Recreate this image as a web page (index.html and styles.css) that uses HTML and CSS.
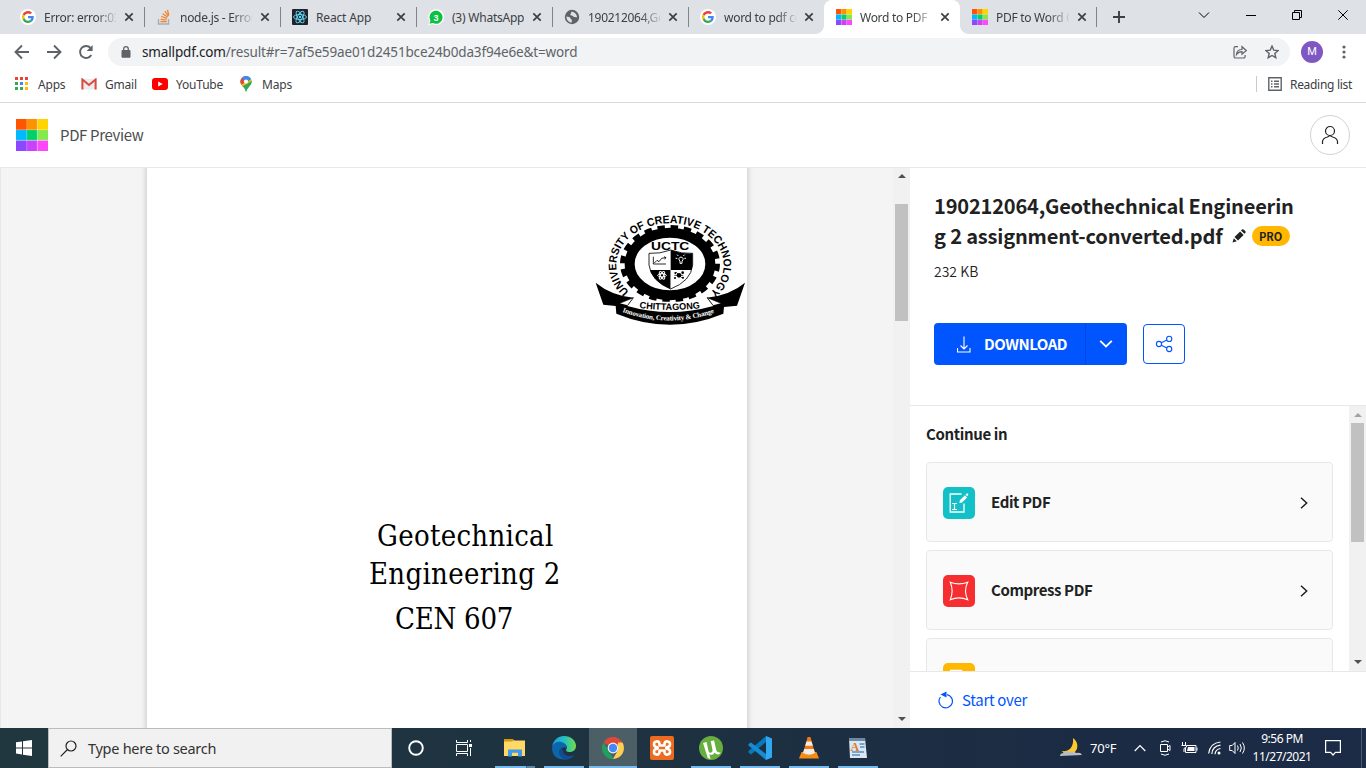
FILE: index.html
```html
<!DOCTYPE html>
<html lang="en">
<head>
<meta charset="utf-8">
<title>Word to PDF</title>
<link rel="stylesheet" href="styles.css">
</head>
<body>
<svg width="0" height="0" class="defs">
  <defs>
    <symbol id="google" viewBox="0 0 48 48"><path fill="#ea4335" d="M24 9.500c3.500 0 6.700 1.200 9.200 3.600l6.900-6.900C35.900 2.400 30.500 0 24 0 14.600 0 6.500 5.400 2.600 13.200l8 6.200C12.400 13.700 17.700 9.500 24 9.500z"/><path fill="#4285f4" d="M47 24.600c0-1.600-.2-3.100-.4-4.600H24v9h12.900c-.6 3-2.300 5.500-4.800 7.200l7.700 6C44.400 38 47 32 47 24.600z"/><path fill="#fbbc05" d="M10.500 28.600A14.500 14.500 0 0 1 10.500 19.400l-8-6.200a24 24 0 0 0 0 21.600z"/><path fill="#34a853" d="M24 48c6.500 0 12-2.100 15.900-5.800l-7.700-6A14.400 14.400 0 0 1 10.500 28.600l-8 6.200C6.500 42.600 14.600 48 24 48z"/></symbol>
    <symbol id="small" viewBox="0 0 32 32"><path fill="#ff5400" d="M0 0h11v11H0z"/><path fill="#ff9100" d="M11 0h10.500v11H11z"/><path fill="#ffd400" d="M21.500 0H32v11H21.500z"/><path fill="#00b9ff" d="M0 11h11v10.500H0z"/><path fill="#00d267" d="M11 11h10.500v10.500H11z"/><path fill="#84e94f" d="M21.500 11H32v10.500H21.500z"/><path fill="#8b48fe" d="M0 21.500h11V32H0z"/><path fill="#ca41fc" d="M11 21.500h10.500V32H11z"/><path fill="#ff46fb" d="M21.500 21.500H32V32H21.500z"/><path d="M10.700 0v32M21.300 0v32M0 10.700h32M0 21.300h32" stroke="#fff" stroke-opacity=".3"/></symbol>
    <symbol id="close" viewBox="0 0 10 10"><path d="M1.300 1.300l7.400 7.400M8.700 1.300l-7.400 7.400" stroke="#3c4043" stroke-width="1.700"/></symbol>
  </defs>
</svg>
<div class="screen">
  <header class="tabs">
    <div class="tab"><span class="fav round"><svg width="12" height="12"><use href="#google"/></svg></span><span class="title">Error: error:0308</span><svg class="x" width="10" height="10"><use href="#close"/></svg></div>
    <div class="tab"><svg class="fav" viewBox="0 0 16 16"><path d="M2.500 10v5h10v-5" fill="none" stroke="#a9adb1" stroke-width="1.400"/><path d="M4.500 12.700h6M4.600 10.300l6 .7M5.200 7.500l5.700 1.900M6.600 4.700l5 3.300M9 2.200l3.400 5M11.500.8l1.300 5.500" stroke="#f48024" stroke-width="1.200"/></svg><span class="title">node.js - Error: e</span><svg class="x" width="10" height="10"><use href="#close"/></svg></div>
    <div class="tab"><svg class="fav" viewBox="0 0 16 16"><rect width="16" height="16" rx="1" fill="#20232a"/><g fill="none" stroke="#61dafb" stroke-width=".9"><ellipse cx="8" cy="8" rx="6.500" ry="2.500"/><ellipse cx="8" cy="8" rx="6.500" ry="2.500" transform="rotate(60 8 8)"/><ellipse cx="8" cy="8" rx="6.500" ry="2.500" transform="rotate(120 8 8)"/></g><circle cx="8" cy="8" r="1.200" fill="#61dafb"/></svg><span class="title">React App</span><svg class="x" width="10" height="10"><use href="#close"/></svg></div>
    <div class="tab"><svg class="fav" viewBox="0 0 16 16"><path d="M.2 16l1.100-4.200A7.900 7.900 0 1 1 4.500 15z" fill="#fff"/><path d="M1.500 14.800l.9-3.300A6.500 6.500 0 1 1 4.800 13.900z" fill="#0bc142"/><text x="8" y="11.500" text-anchor="middle" class="wa">3</text></svg><span class="title">(3) WhatsApp</span><svg class="x" width="10" height="10"><use href="#close"/></svg></div>
    <div class="tab"><svg class="fav" viewBox="0 0 16 16"><circle cx="8" cy="8" r="7.200" fill="#5f6368"/><path d="M2.500 7.500c2 .2 3.500.6 4 2 .3 1 1.300.5 1.300 1.800v2.200c-3 0-5.500-2.500-5.300-6zM7 2.700c1 1.400-.8 2-.7 3 .5 1.500 2.200.4 3 1.700.8 1 2.200.4 3.800.8-.2-3-2.600-5.700-6.100-5.500z" fill="#dee1e6"/></svg><span class="title">190212064,Geoth</span><svg class="x" width="10" height="10"><use href="#close"/></svg></div>
    <div class="tab before"><span class="fav round"><svg width="12" height="12"><use href="#google"/></svg></span><span class="title">word to pdf con</span><svg class="x" width="10" height="10"><use href="#close"/></svg></div>
    <div class="tab active"><svg class="fav"><use href="#small"/></svg><span class="title">Word to PDF | S</span><svg class="x" width="10" height="10"><use href="#close"/></svg></div>
    <div class="tab after"><svg class="fav"><use href="#small"/></svg><span class="title">PDF to Word Co</span><svg class="x" width="10" height="10"><use href="#close"/></svg></div>
    <svg class="plus" width="12" height="12"><path d="M6 0v12M0 6h12" stroke="#3c4043" stroke-width="1.900"/></svg>
    <div class="winbtns">
      <svg width="12" height="10"><path d="M1 2.500l5 5 5-5" fill="none" stroke="#000"/></svg>
      <svg width="10" height="10"><path d="M0 5.500h10" stroke="#000"/></svg>
      <svg width="10" height="10" fill="none" stroke="#000"><path d="M.5 2.500h7v7h-7zM2.500 2.500v-2h7v7h-2"/></svg>
      <svg width="10" height="10" stroke="#000"><path d="M.3.300l9.400 9.400M9.700.300L.3 9.700"/></svg>
    </div>
  </header>

  <div class="toolbar">
    <svg class="nav" width="16" height="16"><path d="M15 8H2M8 1.500L1.500 8 8 14.500" fill="none" stroke="#5f6368" stroke-width="1.900"/></svg>
    <svg class="nav" width="16" height="16"><path d="M1 8h13M8 1.500L14.500 8 8 14.500" fill="none" stroke="#5f6368" stroke-width="1.900"/></svg>
    <svg class="nav" width="16" height="16"><path d="M13.300 11A6 6 0 1 1 12.600 4" fill="none" stroke="#5f6368" stroke-width="1.900"/><path d="M14.600 1v6h-6z" fill="#5f6368"/></svg>
    <div class="omni">
      <svg width="10" height="12"><path d="M1 4.500h8v6.700H1z" fill="#5f6368" stroke="#5f6368" stroke-linejoin="round"/><path d="M2.700 4.500V3a2.300 2.300 0 0 1 4.600 0v1.500" fill="none" stroke="#5f6368" stroke-width="1.300"/></svg>
      <span class="url">smallpdf.com<i>/result#r=7af5e59ae01d2451bce24b0da3f94e6e&amp;t=word</i></span>
      <svg class="share-o" width="14" height="14" fill="none" stroke="#5f6368" stroke-width="1.200"><path d="M5 1.600H2.500Q1 1.600 1 3.200v8.200Q1 13 2.600 13h7.900q1.600 0 1.600-1.600v-1.500M3.500 9.500c.2-3.500 2.200-5 5.500-5V1.700L13.300 5.500 9 9.200V6.700C6.500 6.700 4.800 7.500 3.500 9.500z"/></svg>
      <svg width="14" height="14" viewBox="0 0 14 14"><path d="M7 1.100l1.700 4 4.400.4-3.300 2.900 1 4.300L7 10.500l-3.800 2.200 1-4.300L.9 5.500l4.400-.4z" fill="none" stroke="#5f6368" stroke-width="1.400"/></svg>
    </div>
    <span class="avatar">M</span>
    <svg width="4" height="14" fill="#5f6368"><circle cx="2" cy="2" r="1.600"/><circle cx="2" cy="7" r="1.600"/><circle cx="2" cy="12" r="1.600"/></svg>
  </div>

  <div class="bookmarks">
    <svg width="14" height="14"><path fill="#ea4335" d="M0 0h3v3H0zM5 0h3v3H5zM10 0h3v3h-3z"/><path fill="#34a853" d="M0 5h3v3H0zM0 10h3v3H0zM5 10h3v3H5z"/><path fill="#4285f4" d="M5 5h3v3H5z"/><path fill="#fbbc05" d="M10 5h3v3h-3zM10 10h3v3h-3z"/></svg><span class="bm b1">Apps</span>
    <svg width="16" height="12"><path d="M.5 1h15v10.500H.5z" fill="#ececec"/><path d="M1.400 11.500V1.500L8 7l6.600-5.500v10" fill="none" stroke="#d94b3f" stroke-width="2"/></svg><span class="bm b2">Gmail</span>
    <svg width="16" height="12"><rect width="16" height="12" rx="3" fill="#f00"/><path d="M6.200 3.500v5l4.500-2.500z" fill="#fff"/></svg><span class="bm b3">YouTube</span>
    <svg class="pin" width="12" height="16" viewBox="0 0 12 16"><path d="M6 0a5.600 5.600 0 0 1 5.600 5.700C11.600 9.500 7.500 10.500 6 16c-.8-4-3-5-4.700-7.500A5.600 5.600 0 0 1 6 0z" fill="#34a853"/><path d="M1.300 8.500L10.800 3A5.600 5.600 0 0 1 11.500 6L5 12z" fill="#fbbc05"/><path d="M6 0a5.600 5.600 0 0 1 5 3L6 7.500 1.700 2C2.700.8 4.200 0 6 0z" fill="#4285f4"/><path d="M1.700 2A5.600 5.600 0 0 0 1.200 8.400L6 5.500z" fill="#ea4335"/><path d="M5 9l6.500-4c.5 4-4 5.500-5.500 11-.8-4-2-4.500-3.400-6z" fill="#34a853"/><circle cx="6" cy="5.600" r="2.100" fill="#fff"/></svg><span class="bm b4">Maps</span>
    <span class="reading"><svg width="14" height="14"><path d="M.8.800h12.400v12.400H.8z" fill="none" stroke="#5f6368" stroke-width="1.400"/><path d="M3 4.300h1.500M6 4.300h5M3 7h1.500M6 7h5M3 9.700h1.500M6 9.700h5" stroke="#5f6368" stroke-width="1.400"/></svg><span class="bm">Reading list</span></span>
  </div>

  <div class="sitebar">
    <svg width="32" height="32"><use href="#small"/></svg><span class="preview">PDF Preview</span>
    <span class="user"><svg width="20" height="20" fill="none" stroke="#1f2223" stroke-width="1.200"><circle cx="10" cy="6" r="4.500"/><path d="M2.500 19v-2.500Q3 13 7.500 12L10 10.600l2.500 1.400q4.500 1 5 4.500V19"/></svg></span>
  </div>

  <main class="work">
    <section class="viewer">
      <div class="canvas"><article class="paper">
        <svg class="crest" width="170" height="140" viewBox="0 0 510 420">
          <defs><path id="arc" d="M132 275A161 125 0 1 1 378 275"/><path id="ribbon" d="M112 336Q255 388 400 334"/><path id="city" d="M163 324Q255 336 347 324"/><clipPath id="sh"><path d="M192 160Q225 162 257 150Q290 162 323 160V195Q318 243 257 267Q198 243 192 195z"/></clipPath></defs>
          <ellipse cx="255" cy="191" rx="141" ry="107" fill="none" stroke="#000" stroke-width="18" stroke-dasharray="22 17.200"/>
          <ellipse cx="255" cy="192" rx="121" ry="94" fill="none" stroke="#000" stroke-width="30"/>
          <text class="crest-arc"><textPath href="#arc" textLength="638" lengthAdjust="spacingAndGlyphs">UNIVERSITY OF CREATIVE TECHNOLOGY</textPath></text>
          <text class="uctc" x="198" y="149" textLength="115" lengthAdjust="spacingAndGlyphs">UCTC</text>
          <g clip-path="url(#sh)"><path d="M190 150h67v60h-67z" fill="#fff"/><path d="M257 150h67v60h-67zM190 210h67v60h-67z"/><path d="M257 210h67v60h-67z" fill="#fff"/></g>
          <path d="M192 160Q225 162 257 150Q290 162 323 160V195Q318 243 257 267Q198 243 192 195z" fill="none" stroke="#000" stroke-width="2.500"/>
          <path d="M205 170v22h38M208 189l8-8 6 4 8-10 12-2m-5-3l6 3-4 5" fill="none" stroke="#000" stroke-width="2.500"/>
          <g fill="none" stroke="#fff" stroke-width="3"><path d="M285 190v-6q-8-10 3-13q11 3 3 13v6zM272 175h5M298 175h5M276 164l4 4M299 164l-4 4"/><ellipse cx="231" cy="226" rx="13" ry="5"/><ellipse cx="231" cy="226" rx="13" ry="5" transform="rotate(60 231 226)"/><ellipse cx="231" cy="226" rx="13" ry="5" transform="rotate(120 231 226)"/></g>
          <g><circle cx="282" cy="226" r="7"/><circle cx="271" cy="219" r="3"/><circle cx="270" cy="234" r="3"/><circle cx="293" cy="218" r="4"/><circle cx="294" cy="233" r="3"/><path d="M268 226h27M273 216l19 19" stroke="#000" stroke-width="2"/></g>
          <path d="M145 293Q255 318 366 293L387 318Q255 350 124 318z" fill="#fff"/>
          <path d="M32 248Q80 287 146 293L127 318Q255 354 385 318L365 293Q435 286 480 248L456 317L417 321L415 341Q255 407 94 341L92 318L55 314z"/>
          <path d="M104 310L145 293L128 316M408 310L367 293L384 316" fill="#fff" stroke="#000" stroke-width="2"/>
          <text class="chitt"><textPath href="#city" textLength="183" lengthAdjust="spacingAndGlyphs">CHITTAGONG</textPath></text>
          <text class="motto"><textPath href="#ribbon" textLength="282">Innovation, Creativity &amp; Change</textPath></text>
        </svg>
        <h1 class="cover"><span class="l1">Geotechnical</span><span class="l2">Engineering 2</span><span class="l3">CEN 607</span></h1>
      </article></div>
      <div class="scroll"><i class="up"></i><b class="thumb main"></b><i class="down"></i></div>
    </section>
    <aside class="side">
      <section class="file">
        <h2><span class="f1">190212064,Geothechnical Engineerin</span><span class="row2"><span class="f2">g 2 assignment-converted.pdf</span><svg width="14" height="14" fill="#1f2223"><path d="M.5 13.500l1.300-4.200 3 3zM2.500 8.100l5.600-5.600 3.500 3.500-5.600 5.600zM9 1.600l1-1q1-.7 1.900.2l1.300 1.300q.9.900.1 1.800l-.9.900z"/></svg><em>PRO</em></span></h2>
        <p class="size">232 KB</p>
        <div class="actions">
          <div class="download"><span class="dl"><svg width="14" height="17" fill="none" stroke="#fff" stroke-width="1.100"><path d="M7 .5v12.300M3.500 9.500L7 13l3.500-3.500M.5 12v4h12.500v-4"/></svg><b>DOWNLOAD</b></span><span class="more"><svg width="14" height="10"><path d="M1.200 1.800L7 7.500l5.800-5.700" fill="none" stroke="#fff" stroke-width="1.800"/></svg></span></div>
          <span class="share"><svg width="18" height="18" fill="none" stroke="#05f" stroke-width="1.100"><circle cx="4" cy="9" r="2.600"/><circle cx="14.200" cy="3.900" r="2.600"/><circle cx="14.200" cy="14" r="2.600"/><path d="M6.300 7.800l5.600-2.700M6.300 10.200l5.600 2.700"/></svg></span>
        </div>
      </section>
      <section class="continue">
        <div class="list">
          <h3>Continue in</h3>
          <div class="card"><svg class="tool" viewBox="0 0 32 32"><rect width="32" height="32" rx="5" fill="#12c1c7"/><path d="M18.500 7H7.200v18H21V16.500" fill="none" stroke="#fff" stroke-width="1.300"/><path d="M16.400 16l.5-2.700L22 8.200l2.200 2.200-5.200 5.200zM22.600 7.600l1-1h1.600v1.500l-1 1.200z" fill="#fff"/><path d="M9 16.500h5M9 22.500h5M11.500 16.500v6" stroke="#fff" stroke-width="1.200"/></svg><b class="c1">Edit PDF</b><svg class="chev" width="8" height="12"><path d="M1 .7L6.700 6 1 11.300" fill="none" stroke="#1f2223" stroke-width="1.500"/></svg></div>
          <div class="card"><svg class="tool" viewBox="0 0 32 32"><rect width="32" height="32" rx="5" fill="#f52f30"/><path d="M7.300 7.300Q16 10.500 24.700 7.300Q20.300 16 24.700 24.700Q16 21 7.300 24.700Q11 16 7.300 7.300z" fill="none" stroke="#fff" stroke-width="1.100"/></svg><b class="c2">Compress PDF</b><svg class="chev" width="8" height="12"><path d="M1 .7L6.700 6 1 11.300" fill="none" stroke="#1f2223" stroke-width="1.500"/></svg></div>
          <div class="card"><svg class="tool" viewBox="0 0 32 32"><rect width="32" height="32" rx="5" fill="#ffb700"/><path d="M7 7.500h11.500v5" fill="none" stroke="#fff" stroke-width="1.300"/></svg></div>
        </div>
        <div class="scroll"><i class="up dim"></i><b class="thumb sub"></b><i class="down"></i></div>
      </section>
      <footer class="restart"><svg width="16" height="18"><path d="M2.500 6A6.700 6.700 0 1 0 9 3.600" fill="none" stroke="#05f" stroke-width="1.200"/><path d="M2.500 3.500L8.500.5v6z" fill="#05f"/></svg><span>Start over</span></footer>
    </aside>
  </main>

  <footer class="taskbar">
    <span class="start"><svg width="16" height="16" fill="#fff"><path d="M0 2.200L6 1.400V7.400H0zM7 1.200L16 0v7.400H7zM0 8.400h6v6L0 13.600zM7 8.400h9V16l-9-1.300z"/></svg></span>
    <div class="search"><svg width="17" height="17" fill="none" stroke="#222" stroke-width="1.200"><circle cx="11" cy="6" r="5"/><path d="M7.500 9.500L.7 16.300"/></svg><span>Type here to search</span></div>
    <span class="tb"><svg width="16" height="16"><circle cx="8" cy="8" r="6.800" fill="none" stroke="#fff" stroke-width="1.900"/></svg></span>
    <span class="tb"><svg width="17" height="16" fill="none" stroke="#fff"><path d="M.5 0v2.500h11V0M.5 4.500h11v7H.5zM.5 16v-2.500h11V16M14.500 0v2M14.500 8v8"/><path d="M13 4h3v3h-3z" fill="#fff" stroke="none"/></svg></span>
    <span class="apps">
      <span class="app on folder"><svg viewBox="0 0 24 24"><path d="M1 3h9l1.500 2H22v15H1z" fill="#d9980c"/><path d="M1 5.500h8l1.500-1H22v15.500H1z" fill="#ffd866"/><path d="M5 20.500v-7h14v7h-4v-3.700H9v3.700z" fill="#409ce8"/></svg></span>
      <span class="app on"><svg viewBox="0 0 24 24"><defs><linearGradient id="eg"><stop stop-color="#199ee2"/><stop offset=".5" stop-color="#24bfc4"/><stop offset="1" stop-color="#70dc46"/></linearGradient></defs><path d="M.3 10C1.500 4 6.200 0 12 0c7 0 12 4.600 12 10 0 3.700-2.800 6-6 6-3.500 0-4.700-1.300-3.500-3C16.700 9 10 3.500.3 10z" fill="url(#eg)"/><path d="M.1 11C1 7 5 5.500 8 5.700c4.500.3 7 3.600 6.500 7.300-2-4-7 0-5.700 4 1.200 4 6.700 6 11.500 3.500C15 26-1 25 .1 11z" fill="#0b66ae"/><path d="M9 11.500C4 16.500 9 24 15.500 23.500c3.300-.5 6-2.500 7.500-5-5 3-11.500 1.500-12-3.500z" fill="#124c91"/></svg></span>
      <span class="app on current"><svg viewBox="0 0 24 24"><path d="M2.500 6.500A11 11 0 0 1 21.500 6.500L12 12z" fill="#df4838"/><path d="M2.500 6.500L8 16l5 7A11 11 0 0 1 2.500 6.500z" fill="#1fa15d"/><path d="M21.500 6.500A11 11 0 0 1 12 23l5-9V6.500z" fill="#fed051"/><circle cx="12" cy="12" r="5.400" fill="#f4f4f4"/><circle cx="12" cy="12" r="4.200" fill="#4688f4"/></svg></span>
      <span class="app"><svg viewBox="0 0 24 24"><rect width="24" height="24" rx="2" fill="#ec6b20"/><path d="M9.500 9.500V7.500a2.800 2.800 0 1 0-2.800 3.500Q9 12 6.700 13a2.800 2.800 0 1 0 2.800 3.500V14.500h5v2a2.800 2.800 0 1 0 2.800-3.500Q15 12 17.300 11a2.800 2.800 0 1 0-2.800-3.500v2z" fill="none" stroke="#fff" stroke-width="2.600" stroke-linejoin="round"/></svg></span>
      <span class="app on"><svg viewBox="0 0 24 24"><circle cx="12" cy="12" r="12" fill="#67ae3e"/><path d="M4 7l3.500-1 2 9c.7 3 4.500 2 4-1L11.700 5l3.400-.5 2 9c.4 2 2 3.500 4.500 3-1 2.500-4.500 2.500-6 0-1 2.500-4 3-5.300 1.500L11.500 23 8.800 22z" fill="#fff"/></svg></span>
      <span class="app on"><svg viewBox="0 0 24 24"><path d="M18 0v6L3 18.500.5 16.500V15z" fill="#0879bd"/><path d="M18 24v-6L3 6.500.5 8v1.500z" fill="#168dd3"/><path d="M18 0l6 2.500v19L18 24z" fill="#30a8f2"/></svg></span>
      <span class="app on"><svg viewBox="0 0 24 24"><path d="M4.500 16h15l2.500 6.500H2z" fill="#f68b13"/><path d="M10.600 1h2.800L18 17q-6 3.500-12 0z" fill="#f47b0b"/><path d="M9.500 5.500h5l1.300 4.200H8.200zM7.200 13h9.600l1.200 4q-6 3.500-12 0z" fill="#eee"/></svg></span>
      <span class="app on"><svg viewBox="0 0 24 24"><path d="M3 2h16l2 20H4z" fill="#d9e8f4"/><path d="M3 2h16v3H3z" fill="#6b8aa5"/><path d="M13.500 8h5M14 11h4.500M6 16h12M6 19h8" stroke="#5b8fbc" stroke-width="1.300"/><text x="4.500" y="15" class="wp">A</text></svg></span>
    </span>
    <div class="tray">
      <svg class="moon" width="24" height="20" viewBox="0 0 24 20"><path d="M14 0c6 4 6 13-1 16-5 1-9-.5-10-3 7 1 12-4 11-13z" fill="#ffc928"/><path d="M1 18q0-3 4-3 2-3 6-1 4-2 6 1 5-1 6 2z" fill="#b8bdc2"/></svg>
      <span class="temp">70°F</span>
      <svg class="t1" width="12" height="8"><path d="M.7 7L6 1.500 11.300 7" fill="none" stroke="#fff" stroke-width="1.200"/></svg>
      <svg class="t2" width="12" height="16" fill="none" stroke="#fff"><path d="M1.500 4.500h7v7h-7zM8.500 7l2.500-1.500v5L8.500 9M2 2Q6-.5 10 2M2 14q4 2.500 8 0"/></svg>
      <svg class="t3" width="17" height="12" fill="none" stroke="#fff"><path d="M1.500 0v3M4.500 0v3M.5 3.500h5V5L3 6.500 3 10M6 3.500h9v7H4.500V6M16 5.500v3"/><path d="M7 5h6.500v4H6z" fill="#fff" stroke="none"/></svg>
      <svg class="t4" width="14" height="14" fill="none" stroke="#fff"><path d="M.7 12.500Q2 2 12.500 1M3.800 13Q4.500 5 12.500 4.200M7 13.200q.5-5 5.500-5.700" stroke-width="1.200"/><circle cx="11" cy="12" r="1.500" fill="#fff" stroke="none"/></svg>
      <svg class="t5" width="18" height="14" fill="none" stroke="#fff"><path d="M.7 4.500h2.500L6 1.500v11L3.200 9.500H.7zM8.500 4.500q1.500 2.500 0 5M11 3q2.700 4 0 8M13.500 1.500q3.700 5.500 0 11"/></svg>
      <span class="clock"><span>9:56 PM</span><span>11/27/2021</span></span>
      <svg class="t6" width="16" height="16"><path d="M.6.600h14.800v11.800h-5L8 15l-2.400-2.600h-5z" fill="none" stroke="#fff" stroke-width="1.200"/></svg>
      <i class="peek"></i>
    </div>
  </footer>
</div>
</body>
</html>
```
FILE: styles.css
```css
* { box-sizing: border-box; }
body { margin: 0; overflow: hidden; font-family: "Noto Sans", sans-serif; }
h1, h2, h3, p { margin: 0; }
i, em { font-style: normal; }
svg { flex: none; display: block; }
.defs { display: none; }
.screen { width: 1366px; height: 768px; display: flex; flex-direction: column; background: #fff; overflow: hidden; }

.tabs { height: 34px; flex: none; display: flex; background: #dee1e6; padding-left: 8px; }
.tab { width: 136px; flex: none; display: flex; align-items: center; padding: 0 10px 0 12px; background: linear-gradient(#808387, #808387) no-repeat 0 7px / 1px 20px; }
.tab:first-child { background: none; }
.tab .fav { width: 16px; height: 16px; flex: none; }
.tab .round { display: flex; align-items: center; justify-content: center; background: #fff; border-radius: 50%; }
.title { width: 73px; margin: 0 8px; overflow: hidden; white-space: nowrap; font-size: 12px; letter-spacing: -0.280px; color: #3c4043; mask-image: linear-gradient(90deg, #000 52px, transparent 75px); }
.tab:nth-child(3) .title, .tab:nth-child(4) .title { mask-image: none; letter-spacing: -0.150px; }
.tab:nth-child(4) .title { letter-spacing: -0.230px; }
.tab.before { border-radius: 0 0 8px 0; }
.tab.active { background: #fff; border-radius: 8px 8px 0 0; }
.tab.after { background: linear-gradient(#808387, #808387) no-repeat 100% 7px / 1px 20px; width: 137px; }
.before, .after { position: relative; }
.before::after { content: ""; position: absolute; right: 0; bottom: 0; width: 8px; height: 8px; background: radial-gradient(circle at 0 0, transparent 7.5px, #fff 8px); }
.after::before { content: ""; position: absolute; left: 0; bottom: 0; width: 8px; height: 8px; background: radial-gradient(circle at 100% 0, transparent 7.5px, #fff 8px); }
.plus { margin: 11px 0 0 16px; }
.winbtns { margin-left: auto; display: flex; gap: 36px; align-items: center; height: 29px; padding-right: 18px; }

.toolbar { height: 36px; flex: none; display: flex; align-items: center; padding-left: 14px; }
.nav { margin-right: 16px; }
.omni { width: 1182px; height: 28px; margin-left: -2px; border-radius: 14px; background: #f1f3f4; display: flex; align-items: center; padding: 0 11px 0 13px; }
.omni > svg:first-child { margin-right: 11px; }
.url { font-size: 13.500px; letter-spacing: -0.150px; color: #202124; margin-right: auto; }
.url i { color: #5f6368; }
.omni .share-o { margin-right: 18px; }
.avatar { width: 22px; height: 22px; margin: 0 19px 0 11px; border-radius: 50%; background: #7e57c2; color: #fff; font: 11px/22px Roboto, sans-serif; text-align: center; }

.bookmarks { height: 33px; flex: none; display: flex; align-items: center; padding: 0 14px 4px 15px; border-bottom: 1px solid #d9dadc; }
.bm { font-size: 12px; letter-spacing: -0.200px; color: #3c4043; white-space: nowrap; }
.b1 { width: 43px; margin-left: 9px; } .b2 { width: 47px; margin-left: 8px; } .b3 { width: 64px; margin-left: 8px; } .b4 { margin-left: 10px; }
.reading { margin-left: auto; display: flex; align-items: center; gap: 8px; border-left: 1px solid #ccc; padding-left: 11px; height: 16px; }
.reading .bm { letter-spacing: -0.300px; }

.sitebar { height: 65px; flex: none; display: flex; align-items: center; padding: 0 16px; border-bottom: 1px solid #e8e8e8; }
.preview, .side { font-family: "Noto Sans CJK SC", "Open Sans", sans-serif; }
.preview { font-size: 15px; margin: -2px 0 0 12px; letter-spacing: -0.350px; color: #4c4f50; }
.user { width: 40px; height: 40px; margin-left: auto; border: 1px solid #d2d2d2; border-radius: 50%; display: grid; place-items: center; }

.work { height: 560px; flex: none; display: flex; }
.viewer { width: 910px; display: flex; background: #f4f4f4; }
.canvas { width: 893px; padding-left: 147px; box-shadow: inset 1px 0 #e7e7e7; }
.paper { width: 600px; height: 560px; background: #fff; box-shadow: 0 0 4px 2px #d4d4d4; clip-path: inset(0 -8px); display: flex; flex-direction: column; }
.crest { margin: 32px 0 0 438px; }
.crest-arc { font: bold 33px "Liberation Sans", sans-serif; }
.uctc { font: bold 31px "Liberation Sans", sans-serif; }
.chitt { font: bold 28px "Liberation Sans", sans-serif; }
.motto { font: bold 21px "Liberation Serif", serif; fill: #fff; }
.cover { margin-top: 177px; width: 100%; display: flex; flex-direction: column; font: 400 29px/38px "DejaVu Serif Condensed", "DejaVu Serif", serif; font-stretch: condensed; color: #000; }
.cover span { white-space: nowrap; width: max-content; letter-spacing: 0.300px; }
.l1 { margin-left: 230px; } .l2 { margin-left: 222px; } .cover .l3 { margin: 7px 0 0 248px; letter-spacing: -0.250px; }

.scroll { width: 17px; flex: none; background: #f1f1f1; display: flex; flex-direction: column; align-items: center; }
.up, .down { border: 4px solid transparent; width: 0; height: 0; }
.up { border-bottom-color: #505050; border-top-width: 0; margin-top: 6px; }
.down { border-top-color: #505050; border-bottom-width: 0; margin: auto 0 7px; }
.up.dim { border-bottom-color: #a3a3a3; margin-top: 7px; }
.thumb { width: 13px; background: #c1c1c1; }
.thumb.main { height: 117px; margin-top: 26px; }
.thumb.sub { height: 119px; margin-top: 6px; }

.side { width: 456px; display: flex; flex-direction: column; color: #1f2223; }
.file { height: 238px; flex: none; border-bottom: 1px solid #e8e8e8; padding: 23px 24px 0; }
.file h2 { font-size: 20px; line-height: 30px; font-weight: 700; white-space: nowrap; letter-spacing: -0.170px; }
.file h2 > span { display: flex; }
.row2 { align-items: center; }
.row2 svg { margin-left: 9px; }
.row2 em { width: 38px; height: 20px; margin-left: 6px; border-radius: 10px; background: #ffb700; font-size: 11px; line-height: 20px; text-align: center; letter-spacing: 0; }
.size { font-size: 14px; line-height: 20px; margin-top: 10px; font-weight: 350; }
.actions { display: flex; align-items: center; gap: 16px; margin-top: 42px; }
.download { width: 193px; height: 42px; border-radius: 4px; background: #05f; color: #fff; display: flex; overflow: hidden; }
.dl { width: 152px; border-right: 1px solid #0048e0; display: flex; align-items: center; padding-left: 23px; gap: 13px; font-size: 15px; letter-spacing: -0.500px; }
.dl b { margin-top: -1px; }
.more { flex: 1; display: grid; place-items: center; padding-right: 1px; }
.share { width: 42px; height: 40px; border: 1px solid #05f; border-radius: 4px; display: grid; place-items: center; }
.continue { height: 265px; flex: none; display: flex; }
.list { width: 439px; padding: 15px 16px 0; overflow: hidden; }
.list h3 { font-size: 15px; line-height: 26px; font-weight: 700; margin-bottom: 15px; letter-spacing: -0.350px; }
.card { height: 80px; width: 407px; margin-bottom: 8px; border: 1px solid #e8e8e8; border-radius: 4px; background: #fafafa; display: flex; align-items: center; padding: 0 24px 0 16px; font-size: 15px; letter-spacing: -0.400px; }
.card b { margin-top: -1px; }
.tool { width: 32px; height: 32px; margin: 2px 16px 0 0; }
.chev { margin: 2px 0 0 auto; }
.restart { flex: 1; border-top: 1px solid #e8e8e8; display: flex; align-items: center; gap: 8px; padding-left: 28px; color: #05f; font-size: 15px; letter-spacing: -0.300px; }
.restart span { margin-top: -2px; }
.restart svg { margin-top: -1px; }

.taskbar { height: 40px; flex: none; display: flex; background: linear-gradient(90deg, #20373f, #1e3340 40%, #1b2b44 80%, #1c2b46); color: #fff; }
.start { width: 48px; display: grid; place-items: center; }
.search { width: 344px; border: 1px solid #bbb; background: #f1f1f1; color: #333; display: flex; align-items: center; padding-left: 11px; gap: 11px; font-size: 14.500px; letter-spacing: -0.280px; }
.tb { width: 48px; display: grid; place-items: center; }
.apps { display: flex; margin-left: 2px; }
.app { width: 49px; display: grid; place-items: center; }
.app svg { width: 24px; height: 24px; }
.on { background: linear-gradient(#76b9ed, #76b9ed) no-repeat center bottom / 40px 2px; }
.folder { background: linear-gradient(90deg, #76b9ed 31px, #32576f 31px, #5c87a8 32px) no-repeat 5px bottom / 40px 2px; }
.current { background: linear-gradient(#76b9ed, #76b9ed) no-repeat center bottom / 48px 2px, linear-gradient(#4c5f67, #4c5f67) no-repeat center / 48px 40px; }
.tray { margin-left: auto; display: flex; align-items: center; font-size: 12px; }
.temp { width: 29px; margin: 0 15px 0 7px; font-size: 13px; letter-spacing: -0.200px; }
.t1 { margin-right: 13px; } .t2 { margin-right: 10px; } .t3 { margin-right: 10px; } .t4 { margin-right: 7px; }
.clock { width: 60px; margin: 0 13px 0 5px; display: flex; flex-direction: column; align-items: center; line-height: 18px; letter-spacing: -0.500px; white-space: nowrap; }
.peek { width: 1px; height: 40px; margin: 0 4px 0 20px; background: #4d596c; }
.wa { font: bold 9px "Liberation Sans", sans-serif; fill: #fff; }
.wp { font: bold 12px "Liberation Serif", serif; fill: #e87722; }
```
